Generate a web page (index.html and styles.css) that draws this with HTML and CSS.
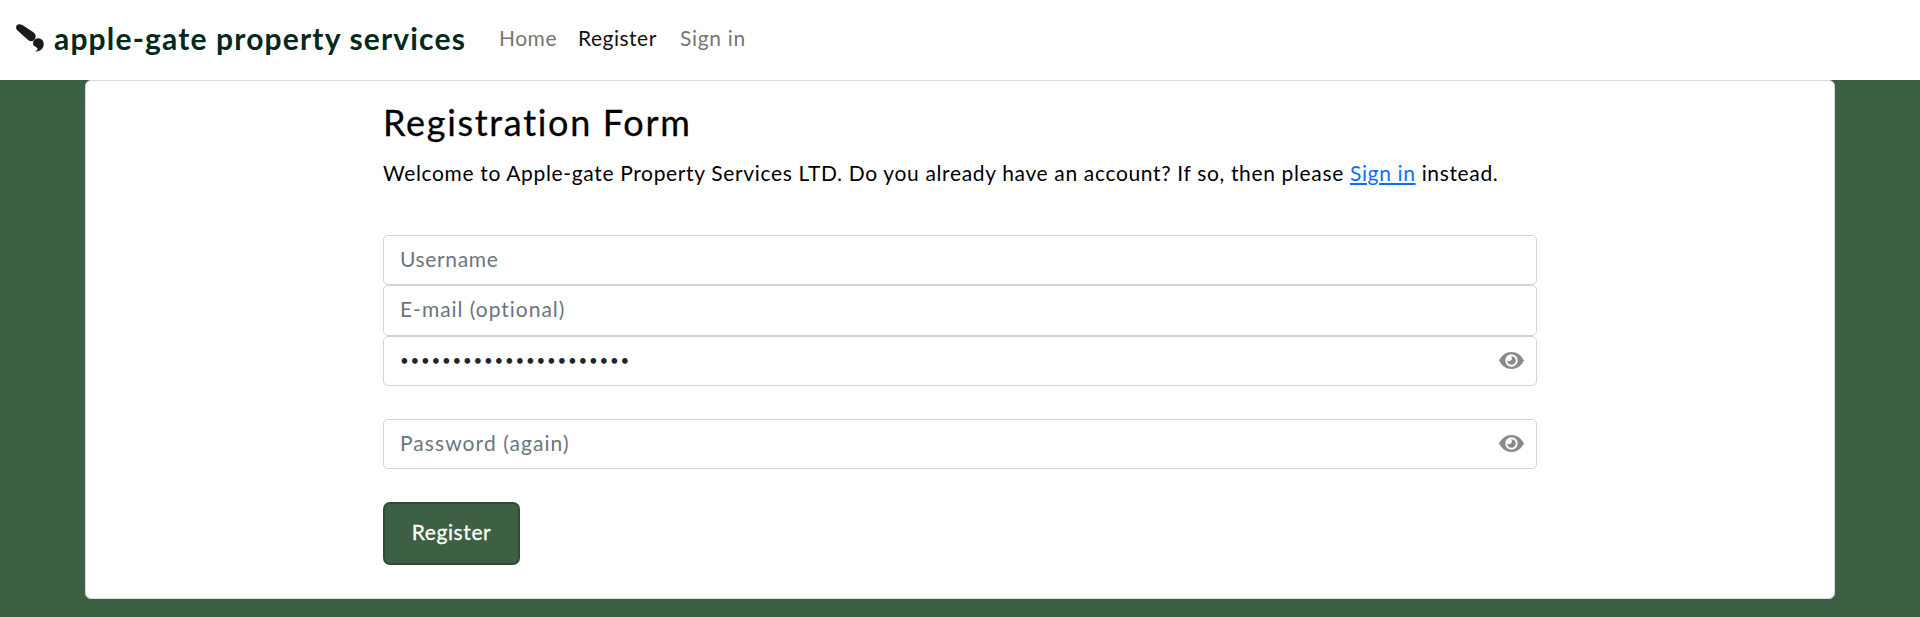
FILE: index.html
```html
<!DOCTYPE html>
<html lang="en">
<head>
<meta charset="utf-8">
<title>Registration</title>
<link rel="stylesheet" href="styles.css">
</head>
<body>
<svg class="defs" width="0" height="0" aria-hidden="true">
  <symbol id="eye" viewBox="0 0 25 17">
    <path fill-rule="evenodd" d="M0 8.500C2.600 3.400 7.200 0 12.500 0S22.400 3.400 25 8.500C22.400 13.600 17.800 17 12.500 17S2.600 13.600 0 8.500ZM12.500 2.300a6.200 6.200 0 1 0 0 12.400a6.200 6.200 0 1 0 0-12.400Z"/>
    <path d="M12 4.300a4.300 4.300 0 1 1-3.800 3.900a2.200 2.200 0 0 0 3.800-3.900Z"/>
  </symbol>
</svg>
<nav class="navbar">
  <a class="brand"><svg class="brush" viewBox="0 0 28 28"><path d="M.7 1.600C1.900-.1 4.300-.2 6.300 1L17 7.900C19.500 9.600 20.200 12.200 19.200 14.500C18 17.200 15 18 12.400 16.200L1.500 6.600C-.1 5.100-.4 3.200.7 1.600Z"/><path d="M17.200 18.700C16.900 16.600 20 14 22.900 14.300C26.600 14.700 28.300 18 27.600 21.600C26.700 25.600 23.100 28.100 19 27.400C21.300 26.300 22 25.300 21.300 24.300C20.500 23 17.700 22.500 17.200 20.600Z"/></svg><span class="brand-name">apple-gate property services</span></a>
  <a class="link home">Home</a>
  <a class="link register active">Register</a>
  <a class="link signin">Sign in</a>
</nav>
<main class="card">
  <form class="form">
    <h1 class="title">Registration Form</h1>
    <p class="intro">Welcome to Apple-gate Property Services LTD. Do you already have an account? If so, then please <a class="inline-link">Sign in</a> instead.</p>
    <div class="field"><span class="username">Username</span></div>
    <div class="field middle"><span class="email">E-mail (optional)</span></div>
    <div class="field"><span class="dots">••••••••••••••••••••••</span><svg class="eye"><use href="#eye"/></svg></div>
    <div class="field again"><span class="password">Password (again)</span><svg class="eye"><use href="#eye"/></svg></div>
    <button class="submit" type="button">Register</button>
  </form>
</main>
</body>
</html>
```
FILE: styles.css
```css
* { box-sizing: border-box; }
body { margin: 0; background: #3d5f43; font-family: Lato, sans-serif; font-size: 21px; color: #000; height: 617px; overflow: hidden; }
.defs { display: block; }
.navbar { height: 80px; background: #fff; display: flex; align-items: flex-start; padding: 0 16px; white-space: nowrap; }
.brand { display: flex; width: 483px; color: #03291b; }
.brush { width: 28px; height: 28px; margin: 24px 10px 0 0; fill: #1b1b1b; flex: none; }
.brand-name { font-size: 30px; font-weight: 700; line-height: 40px; padding-top: 18px; letter-spacing: 1.17px; }
.link { line-height: 30px; padding-top: 23px; color: #767676; letter-spacing: 0.5px; }
.home { width: 79px; }
.register { width: 102px; }
.signin { letter-spacing: 0.7px; }
.active { color: #111; }
.card { width: 1750px; height: 519px; margin: 0 auto; background: #fff; border: 1px solid #dadada; border-radius: 6px; }
.form { width: 1154px; margin: 0 297px; padding-top: 19px; }
.title { margin: 0; font-size: 36px; font-weight: 400; line-height: 44px; letter-spacing: 1.68px; -webkit-text-stroke: 0.3px; }
.intro { margin: 14px 0 47px; line-height: 30px; letter-spacing: 0.65px; white-space: nowrap; }
.inline-link { color: #0d6efd; text-decoration: underline; text-underline-offset: 2px; }
.field { height: 50px; border: 1px solid #ced4da; border-radius: 5px; padding: 0 12px 0 16px; display: flex; align-items: center; justify-content: space-between; color: #6c757d; line-height: 30px; letter-spacing: 0.65px; }
.field.middle { height: 51px; }
.field.again { margin-top: 33px; }
.username, .email, .password { padding-bottom: 3px; }
.email { letter-spacing: 0.98px; }
.password { letter-spacing: 1.07px; }
.dots { color: #212529; font-size: 15px; letter-spacing: 1.8px; padding-bottom: 2px; }
.eye { width: 25px; height: 17px; margin-bottom: 2px; fill: #8a8a8a; }
.submit { display: block; margin-top: 33px; width: 137px; height: 63px; padding: 0 0 4px; border: 2px solid #2e4b36; border-radius: 7px; background: #3d5f43; color: #fff; font-family: inherit; font-size: 21px; letter-spacing: 0.6px; -webkit-text-stroke: 0.3px; }
```
